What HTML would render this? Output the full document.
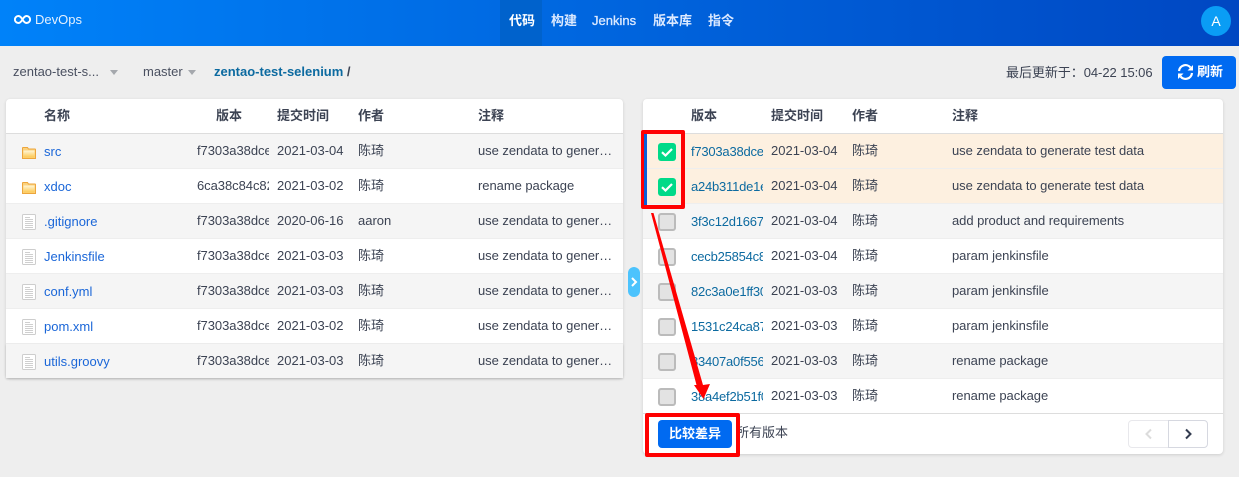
<!DOCTYPE html>
<html lang="zh"><head><meta charset="utf-8"><title>DevOps</title>
<style>
*{box-sizing:border-box}
html,body{margin:0;padding:0}
body{width:1239px;height:477px;background:#eee;position:relative;overflow:hidden;font-family:"Liberation Sans","Noto Sans CJK SC",sans-serif;font-size:13px;color:#3c4353}
.a{position:absolute;white-space:nowrap}
#hd{left:0;top:0;width:1239px;height:46px;background:linear-gradient(90deg,#0082f9,#0047c2)}
.nav{top:0;height:46px;line-height:41px;color:#dbe9ff;font-weight:700;font-size:13px}
.panel{background:#fff;border-radius:4px;box-shadow:0 1px 3px rgba(0,0,0,.14)}
.th{top:108px;line-height:15px;font-weight:700;color:#3c4353}
.row{height:35px;border-bottom:1px solid #eee}
.odd{background:#f5f5f5}.even{background:#fff}
.t{line-height:16px}
.link{color:#1a66d8}
.clip{overflow:hidden;width:72px;letter-spacing:-.05px}
.hash{color:#0c6aa0;letter-spacing:-.22px}
.cb{left:658px;width:18px;height:18px;border-radius:3px;background:#e3e3e3;border:2px solid #bbb}
.cb.on{background:#00da88;border:0}
.cb svg{display:block}
</style></head><body>
<div class="a" id="hd"></div>
<svg class="a" style="left:14px;top:15px" width="17" height="9" viewBox="0 0 17 9"><path d="M8.500 4.500C7.200 2.200 6 1 4.400 1a3.500 3.500 0 0 0 0 7C6 8 7.200 6.800 8.500 4.500 9.800 2.200 11 1 12.600 1a3.500 3.500 0 0 1 0 7C11 8 9.800 6.800 8.500 4.500z" fill="none" stroke="#fff" stroke-width="1.900"/></svg>
<div class="a" style="left:35px;top:12px;color:#e3f0ff;font-size:13px;line-height:16px">DevOps</div>
<div class="a" style="left:500px;top:0;width:42px;height:46px;background:#0062cc"></div>
<div class="a nav" style="left:509px;color:#fff">代码</div>
<div class="a nav" style="left:551px">构建</div>
<div class="a nav" style="left:592px;font-weight:400;-webkit-text-stroke:.3px #dbe9ff">Jenkins</div>
<div class="a nav" style="left:653px">版本库</div>
<div class="a nav" style="left:708px">指令</div>
<div class="a" style="left:1201px;top:6px;width:30px;height:30px;border-radius:50%;background:#0a9df5;color:#fff;text-align:center;line-height:30px;font-size:14px">A</div>

<div class="a t" style="left:13px;top:64px;color:#4a5060">zentao-test-s...</div>
<div class="a" style="left:110px;top:70px;border:4px solid transparent;border-top:5px solid #a5a8ad;border-bottom:0"></div>
<div class="a t" style="left:143px;top:64px;color:#4a5060">master</div>
<div class="a" style="left:188px;top:70px;border:4px solid transparent;border-top:5px solid #a5a8ad;border-bottom:0"></div>
<div class="a t" style="left:214px;top:64px;font-weight:700;color:#0c6aa0">zentao-test-selenium <span style="color:#3c4353;font-weight:700">/</span></div>
<div class="a t" style="left:1006px;top:65px;letter-spacing:-.05px">最后更新于：04-22 15:06</div>
<div class="a" style="left:1162px;top:56px;width:74px;height:33px;background:#006af1;border-radius:4px"></div>
<svg class="a" style="left:1177px;top:64px" width="17" height="16" viewBox="0 0 17 16"><path d="M2 7A6.500 6.500 0 0 1 13.500 3.500M15 9A6.500 6.500 0 0 1 3.500 12.500" fill="none" stroke="#fff" stroke-width="2.200"/><path d="M16 1v5.500h-5.500zM1 15v-5.500h5.500z" fill="#fff"/></svg>
<div class="a t" style="left:1197px;top:64px;color:#fff;font-weight:700">刷新</div>

<!-- left panel -->
<div class="a panel" style="left:6px;top:99px;width:617px;height:279px"></div>
<div class="a" style="left:6px;top:133px;width:617px;height:1px;background:#ddd"></div>
<div class="a th" style="left:44px">名称</div><div class="a th" style="left:216px">版本</div><div class="a th" style="left:277px">提交时间</div><div class="a th" style="left:358px">作者</div><div class="a th" style="left:478px">注释</div>

<div class="a row odd" style="left:6px;top:134px;width:617px"></div>
<div class="a row even" style="left:6px;top:169px;width:617px"></div>
<div class="a row odd" style="left:6px;top:204px;width:617px"></div>
<div class="a row even" style="left:6px;top:239px;width:617px"></div>
<div class="a row odd" style="left:6px;top:274px;width:617px"></div>
<div class="a row even" style="left:6px;top:309px;width:617px"></div>
<div class="a row odd" style="left:6px;top:344px;width:617px;height:34px;border:0;box-shadow:0 1px 2px rgba(0,0,0,.15)"></div>

<svg width="0" height="0" style="position:absolute"><defs>
<linearGradient id="g" x1="0" y1="0" x2="0" y2="1"><stop offset="0" stop-color="#fff6d8"/><stop offset="1" stop-color="#fdc850"/></linearGradient>
<symbol id="fo" viewBox="0 0 14 12"><path d="M.5 11.500V1q0-.5.5-.5h4.500l1 1.500H13q.5 0 .5.500v9z" fill="#fbd27e" stroke="#eda63c"/><path d="M1.500 3.500h11v7h-11z" fill="url(#g)"/></symbol>
<symbol id="fi" viewBox="0 0 14 16"><rect x=".5" y=".5" width="13" height="15" rx="1" fill="#fff" stroke="#cdcdcd"/><path d="M3 3.500h5M3 5.500h8M3 7.500h8M3 9.500h8M3 11.500h8M3 13.500h8" stroke="#cfcfcf"/></symbol>
</defs></svg>
<svg class="a" style="left:22px;top:147px" width="14" height="12"><use href="#fo"/></svg>
<svg class="a" style="left:22px;top:182px" width="14" height="12"><use href="#fo"/></svg>
<svg class="a" style="left:22px;top:214px" width="14" height="16"><use href="#fi"/></svg>
<svg class="a" style="left:22px;top:249px" width="14" height="16"><use href="#fi"/></svg>
<svg class="a" style="left:22px;top:284px" width="14" height="16"><use href="#fi"/></svg>
<svg class="a" style="left:22px;top:319px" width="14" height="16"><use href="#fi"/></svg>
<svg class="a" style="left:22px;top:354px" width="14" height="16"><use href="#fi"/></svg>

<div class="a t link" style="left:44px;top:144px">src</div><div class="a t clip" style="left:197px;top:143px">f7303a38dce6</div><div class="a t" style="left:277px;top:143px">2021-03-04</div><div class="a t" style="left:358px;top:143px">陈琦</div><div class="a t" style="left:478px;top:143px;letter-spacing:-.05px">use zendata to gener…</div>
<div class="a t link" style="left:44px;top:179px">xdoc</div><div class="a t clip" style="left:197px;top:178px">6ca38c84c82a</div><div class="a t" style="left:277px;top:178px">2021-03-02</div><div class="a t" style="left:358px;top:178px">陈琦</div><div class="a t" style="left:478px;top:178px;letter-spacing:-.05px">rename package</div>
<div class="a t link" style="left:44px;top:214px">.gitignore</div><div class="a t clip" style="left:197px;top:213px">f7303a38dce6</div><div class="a t" style="left:277px;top:213px">2020-06-16</div><div class="a t" style="left:358px;top:213px">aaron</div><div class="a t" style="left:478px;top:213px;letter-spacing:-.05px">use zendata to gener…</div>
<div class="a t link" style="left:44px;top:249px">Jenkinsfile</div><div class="a t clip" style="left:197px;top:248px">f7303a38dce6</div><div class="a t" style="left:277px;top:248px">2021-03-03</div><div class="a t" style="left:358px;top:248px">陈琦</div><div class="a t" style="left:478px;top:248px;letter-spacing:-.05px">use zendata to gener…</div>
<div class="a t link" style="left:44px;top:284px">conf.yml</div><div class="a t clip" style="left:197px;top:283px">f7303a38dce6</div><div class="a t" style="left:277px;top:283px">2021-03-03</div><div class="a t" style="left:358px;top:283px">陈琦</div><div class="a t" style="left:478px;top:283px;letter-spacing:-.05px">use zendata to gener…</div>
<div class="a t link" style="left:44px;top:319px">pom.xml</div><div class="a t clip" style="left:197px;top:318px">f7303a38dce6</div><div class="a t" style="left:277px;top:318px">2021-03-02</div><div class="a t" style="left:358px;top:318px">陈琦</div><div class="a t" style="left:478px;top:318px;letter-spacing:-.05px">use zendata to gener…</div>
<div class="a t link" style="left:44px;top:354px">utils.groovy</div><div class="a t clip" style="left:197px;top:353px">f7303a38dce6</div><div class="a t" style="left:277px;top:353px">2021-03-03</div><div class="a t" style="left:358px;top:353px">陈琦</div><div class="a t" style="left:478px;top:353px;letter-spacing:-.05px">use zendata to gener…</div>

<!-- toggle -->
<div class="a" style="left:628px;top:267px;width:12px;height:30px;border-radius:6px;background:#4cc3fd"></div>
<svg class="a" style="left:630px;top:277px" width="8" height="10"><path d="M2 1l4 4-4 4" fill="none" stroke="#fff" stroke-width="2"/></svg>

<!-- right panel -->
<div class="a panel" style="left:643px;top:99px;width:580px;height:355px"></div>
<div class="a" style="left:643px;top:133px;width:580px;height:1px;background:#ddd"></div>
<div class="a th" style="left:691px">版本</div><div class="a th" style="left:771px">提交时间</div><div class="a th" style="left:852px">作者</div><div class="a th" style="left:952px">注释</div>

<div class="a row" style="left:643px;top:134px;width:580px;background:#fdf0e0"></div>
<div class="a row" style="left:643px;top:169px;width:580px;background:#fdf0e0"></div>
<div class="a row odd" style="left:643px;top:204px;width:580px"></div>
<div class="a row even" style="left:643px;top:239px;width:580px"></div>
<div class="a row odd" style="left:643px;top:274px;width:580px"></div>
<div class="a row even" style="left:643px;top:309px;width:580px"></div>
<div class="a row odd" style="left:643px;top:344px;width:580px"></div>
<div class="a row even" style="left:643px;top:379px;width:580px"></div>
<div class="a" style="left:643px;top:413px;width:580px;height:1px;background:#ddd"></div>

<div class="a cb on" style="top:143px"><svg width="18" height="18"><path d="M4 9.200l3.500 3.300 6.500-6.500" fill="none" stroke="#fff" stroke-width="2.200"/></svg></div>
<div class="a cb on" style="top:178px"><svg width="18" height="18"><path d="M4 9.200l3.500 3.300 6.500-6.500" fill="none" stroke="#fff" stroke-width="2.200"/></svg></div>
<div class="a cb" style="top:213px"></div>
<div class="a cb" style="top:248px"></div>
<div class="a cb" style="top:283px"></div>
<div class="a cb" style="top:318px"></div>
<div class="a cb" style="top:353px"></div>
<div class="a cb" style="top:388px"></div>

<div class="a t clip hash" style="left:691px;top:144px">f7303a38dce6</div><div class="a t" style="left:771px;top:143px">2021-03-04</div><div class="a t" style="left:852px;top:143px">陈琦</div><div class="a t" style="left:952px;top:143px;letter-spacing:-.05px">use zendata to generate test data</div>
<div class="a t clip hash" style="left:691px;top:179px">a24b311de1e3</div><div class="a t" style="left:771px;top:178px">2021-03-04</div><div class="a t" style="left:852px;top:178px">陈琦</div><div class="a t" style="left:952px;top:178px;letter-spacing:-.05px">use zendata to generate test data</div>
<div class="a t clip hash" style="left:691px;top:214px">3f3c12d1667a</div><div class="a t" style="left:771px;top:213px">2021-03-04</div><div class="a t" style="left:852px;top:213px">陈琦</div><div class="a t" style="left:952px;top:213px;letter-spacing:-.05px">add product and requirements</div>
<div class="a t clip hash" style="left:691px;top:249px">cecb25854c80</div><div class="a t" style="left:771px;top:248px">2021-03-04</div><div class="a t" style="left:852px;top:248px">陈琦</div><div class="a t" style="left:952px;top:248px;letter-spacing:-.05px">param jenkinsfile</div>
<div class="a t clip hash" style="left:691px;top:284px">82c3a0e1ff30</div><div class="a t" style="left:771px;top:283px">2021-03-03</div><div class="a t" style="left:852px;top:283px">陈琦</div><div class="a t" style="left:952px;top:283px;letter-spacing:-.05px">param jenkinsfile</div>
<div class="a t clip hash" style="left:691px;top:319px">1531c24ca871</div><div class="a t" style="left:771px;top:318px">2021-03-03</div><div class="a t" style="left:852px;top:318px">陈琦</div><div class="a t" style="left:952px;top:318px;letter-spacing:-.05px">param jenkinsfile</div>
<div class="a t clip hash" style="left:691px;top:354px">83407a0f5564</div><div class="a t" style="left:771px;top:353px">2021-03-03</div><div class="a t" style="left:852px;top:353px">陈琦</div><div class="a t" style="left:952px;top:353px;letter-spacing:-.05px">rename package</div>
<div class="a t clip hash" style="left:691px;top:389px">38a4ef2b51f0</div><div class="a t" style="left:771px;top:388px">2021-03-03</div><div class="a t" style="left:852px;top:388px">陈琦</div><div class="a t" style="left:952px;top:388px;letter-spacing:-.05px">rename package</div>

<!-- footer -->
<div class="a t" style="left:736px;top:425px;color:#3c4353">所有版本</div>
<div class="a" style="left:658px;top:420px;width:74px;height:28px;background:#006af1;border-radius:4px;color:#fff;font-weight:700;text-align:center;line-height:28px">比较差异</div>
<div class="a" style="left:1128px;top:420px;width:41px;height:28px;border:1px solid #e8e8ec;border-radius:4px 0 0 4px;background:#fff"></div>
<div class="a" style="left:1168px;top:420px;width:40px;height:28px;border:1px solid #d6d8e0;border-radius:0 4px 4px 0;background:#fff"></div>
<svg class="a" style="left:1144px;top:428px" width="9" height="12"><path d="M7 1.500L2.500 6 7 10.500" fill="none" stroke="#dcdcdc" stroke-width="2"/></svg>
<svg class="a" style="left:1184px;top:428px" width="9" height="12"><path d="M2 1.500L6.500 6 2 10.500" fill="none" stroke="#333c50" stroke-width="2"/></svg>

<!-- annotations -->
<div class="a" style="left:641px;top:130px;width:44px;height:79px;border:4px solid #f00;border-left-width:3px;border-radius:2px"></div>
<div class="a" style="left:644px;top:134px;width:3px;height:71px;background:#0a5fd8"></div>
<div class="a" style="left:645px;top:413px;width:95px;height:44px;border:4px solid #f00;border-radius:2px"></div>
<svg class="a" style="left:640px;top:205px" width="80" height="200"><path d="M11 8L13.500 8 63 180 70 179 63.500 194 54 180 56.500 180z" fill="#f00"/></svg>
</body></html>
